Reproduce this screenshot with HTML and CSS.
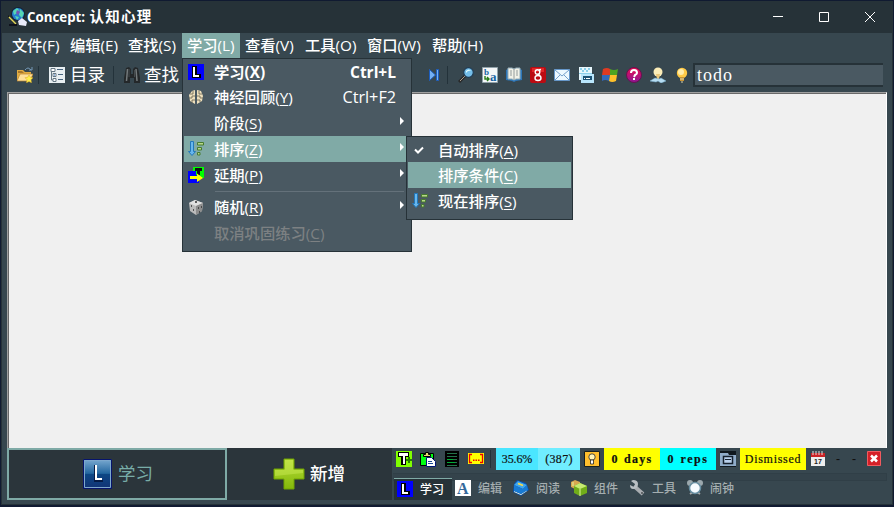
FILE: index.html
```
<!DOCTYPE html>
<html lang="zh-CN">
<head>
<meta charset="utf-8">
<title>Concept: 认知心理</title>
<link rel="stylesheet" href="styles.css">
</head>
<body>
<svg width="0" height="0" class="defs">
  <defs>
    <linearGradient id="blue" x1="0" y1="0" x2="0" y2="1"><stop offset="0" stop-color="#79a9d0"/><stop offset=".48" stop-color="#23669f"/><stop offset=".5" stop-color="#0d4785"/><stop offset="1" stop-color="#123375"/></linearGradient>
    <linearGradient id="green" x1="0" y1="0" x2="0" y2="1"><stop offset="0" stop-color="#b6dc38"/><stop offset="1" stop-color="#83b80b"/></linearGradient>
    <linearGradient id="pink" x1="0" y1="0" x2="0" y2="1"><stop offset="0" stop-color="#ed0b50"/><stop offset="1" stop-color="#8c1797"/></linearGradient>
    <symbol id="learn" viewBox="0 0 16 16"><path fill="#00f" d="M0 0h16v16H0z"/><path d="M4 2h5v8h4v4H4z" fill="#000"/><path d="M5 3h2v8h4v2H5z" fill="#fff"/></symbol>
    <symbol id="sort" viewBox="0 0 16 16"><path d="M2.500.5h3v10h2l-3.500 4-3.500-4h2z" fill="#68b7ed" stroke="#2378ba"/><path d="M9.500 1.500h6v2.500h-6zM9.500 6.500h4v2.500h-4zM9.500 11.500h2.500v2.500H9.500z" fill="#b8d889" stroke="#477b2f"/></symbol>
  </defs>
</svg>
<div class="window">
  <header class="titlebar">
    <svg class="appicon" viewBox="0 0 20 20"><circle cx="10" cy="7" r="7" fill="#142338"/><circle cx="10" cy="7" r="6" fill="#267ed0"/><path d="M5 4l4-3 2 2-2 3-3 2zM12 2l4 4-2 5-3-3zM7 9l4 1-2 3z" fill="#55d7b4"/><path d="M9 3l3 2-2 3-2-2z" fill="#7354b5"/><path d="M0 8l9 9-1 2-8-9z" fill="#171717"/><path d="M1 10l7 7" stroke="#e2d95d" stroke-width="1.500"/><path d="M10 14l4-3 5 4-1 4-7-1z" fill="#e9ebfa"/><path d="M1 18h8" stroke="#080815" stroke-width="1.500"/></svg>
    <h1>Concept: <span>认知心理</span></h1>
    <div class="controls"><svg viewBox="0 0 12 12"><path d="M1 5.500h10"/></svg><svg viewBox="0 0 12 12"><path d="M1.500 1.500h9v9h-9z"/></svg><svg viewBox="0 0 12 12"><path d="M1 1l10 10M11 1L1 11"/></svg></div>
  </header>
  <nav class="menubar"><span>文件(F)</span><span>编辑(E)</span><span>查找(S)</span><span class="selected">学习(L)</span><span class="m60">查看(V)</span><span class="m62">工具(O)</span><span class="m65">窗口(W)</span><span>帮助(H)</span></nav>
  <div class="toolbar">
    <svg class="icon" viewBox="0 0 16 16"><path d="M0 3h6l2 2h6v9H0z" fill="#e1ac42"/><path d="M1 4h4l2 2H1z" fill="#a7772c"/><path d="M3 7h13l-3 7H0z" fill="#ffe09a" stroke="#b9832e" stroke-width=".7"/><path d="M8 3q3-4 6 0M12 3h3V0" fill="none" stroke="#7598b6"/><path d="M12 8l1.300 2.300 2.700.4-2 2 .5 3-2.500-1.200-2.500 1.200.5-3-2-2 2.700-.4z" fill="#fff04e" stroke="#d8a523" stroke-width=".5"/></svg>
    <i class="rule catalog-rule"></i>
    <svg class="icon catalog" viewBox="0 0 16 16"><path d="M0 0h16v16H0z" fill="#e8eff2"/><path d="M2 1.500h4v3H2zM4 6.500h3v3H4zM4 11.500h3v3H4zM2.500 4v9H4" stroke="#657783" fill="#fff"/><path d="M8 2.500h6M9 7.500h5M9 12.500h5" stroke="#48657f"/><path d="M5 7.500h1v1H5z" fill="#266ac0"/></svg>
    <span class="tooltext">目录</span><i class="rule find-rule"></i>
    <svg class="icon find" viewBox="0 0 16 16"><path d="M2 1l3-1 2 2v5h2V2l2-2 3 1 2 10v5h-6v-5H6v5H0v-5z" fill="#24282a"/><path d="M3.500 2l-1 12M12 2l1 12" stroke="#747a7c" stroke-width="1.500"/><path d="M5 2v8M10.500 3v7" stroke="#454b4e"/></svg>
    <span class="tooltext">查找</span>
    <svg class="icon skip" viewBox="0 0 16 16"><path d="M3.500 2.500l6 5.500-6 5.500zM10.500 2.500h2v11h-2z" fill="#73b0f4" stroke="#1d5dbd"/></svg><i class="rule skip-rule"></i>
    <div class="toolset">
      <svg viewBox="0 0 16 16"><path d="M7 9l-6 6" stroke="#292929" stroke-width="3"/><path d="M7 9l-5 5" stroke="#ab9e8e"/><circle cx="10.500" cy="5.500" r="4.800" fill="#74bee9" stroke="#203c54" stroke-width="1.200"/><path d="M8 4q3-3 5 0-3-1-5 2z" fill="#ddfcff"/></svg>
      <svg viewBox="0 0 16 16"><path d="M.5.5h15v15H.5z" fill="#f4f7f8" stroke="#91a2aa"/><text x="2" y="8" class="tiny">b</text><text x="8" y="14" class="letter">a</text><path d="M3 9v3h4M5 10l2 2-2 2" fill="none" stroke="#277b17" stroke-width="1.400"/></svg>
      <svg viewBox="0 0 16 16"><path d="M0 3l2-1h12l2 1v10l-6 1-2 1-2-1-6-1z" fill="#2d76b8"/><path d="M2 1h4l2 1 2-1h4v11h-4l-2 1-2-1H2z" fill="#f1f1e8" stroke="#94adb9"/><path d="M8 2v10M4 4h2M4 6h2M4 8h2M10 4h2M10 6h2M10 8h2" stroke="#7c8588" stroke-width=".8"/></svg>
      <svg viewBox="0 0 16 16"><rect width="16" height="16" rx="2" fill="#bb0b12"/><path d="M2 1h12v4H2z" fill="#e12628"/><circle cx="7.500" cy="5" r="2.300" class="loop"/><ellipse cx="8" cy="11" rx="3" ry="2.500" class="loop"/><path d="M9 3l2-.5M8 7l2 1.500" class="loop"/></svg>
      <svg viewBox="0 0 16 16"><path d="M.5 2.500h15v11H.5z" fill="#edf8ff" stroke="#6697c9"/><path d="M1 3l7 6 7-6M1 13l5-5m9 5l-5-5" fill="none" stroke="#739fca"/></svg>
      <svg viewBox="0 0 16 16"><path d="M1 0h13v13H1z" fill="#e7f7fd"/><path d="M2 1h2v2H2zm4 0h2v2H6zm4 0h2v2h-2zM4 3h2v2H4zm4 0h2v2H8zM1 6h13v1H1z" fill="#8bd0eb"/><path d="M3 7h13v9H3z" fill="#b9e6fc"/><path d="M5 9h9v4H5z" fill="#1c5376"/><path d="M6 11h1v1H6zm2 0h4v1H8z" fill="#fff"/></svg>
      <svg viewBox="0 0 16 16"><path d="M1 2q4-2 7 0v6H0z" fill="#de3b23"/><path d="M8 2q4 2 8 0l-1 6H8z" fill="#4da421"/><path d="M0 8h8l-1 6q-4-2-7 0z" fill="#3269bc"/><path d="M8 8h7l-1 6q-4 2-7 0z" fill="#ffc12b"/></svg>
      <svg viewBox="0 0 16 16"><circle cx="8" cy="8" r="7.500" fill="url(#pink)" stroke="#65124f"/><path d="M5 6q0-3 3-3t3 3q0 1-2 2l-1 2M8 11v2" fill="none" stroke="#fff" stroke-width="2"/></svg>
      <svg viewBox="0 0 16 16"><circle cx="8" cy="5" r="4.500" fill="#fbedb8"/><path d="M6 7h4l-1 5H7z" fill="#e9c77b"/><path d="M5 11L0 14l6 1 2-1 3 2 5-2-5-3-2 1z" fill="#b7ddf2" stroke="#7cb4d5" stroke-width=".5"/></svg>
      <svg viewBox="0 0 16 16"><circle cx="8" cy="6" r="5.200" fill="#ffca46"/><circle cx="7" cy="5" r="3" fill="#ffedac"/><path d="M6 10h4v4H6z" fill="#c79232"/><path d="M6 12h4M7 15h2" stroke="#ddd5ac"/></svg>
    </div>
    <div class="search">todo</div>
  </div>
  <main></main>
  <footer>
    <div class="study"><svg viewBox="0 0 30 30"><path d="M.5.5h28v29H.5z" fill="url(#blue)" stroke="#06146c"/><path d="M1.500 1.500h26v27h-26z" fill="none" stroke="#7da8cd"/><path d="M11 6h2v15h7v2h-9z" fill="#061b45"/><path d="M12 6h2v13h5v2h-7z" fill="#fff"/></svg><span>学习</span></div>
    <div class="add"><svg viewBox="0 0 32 32"><path d="M11 1h10v10h10v10H21v10H11V21H1V11h10z" fill="url(#green)" stroke="#71a500"/><path d="M12 2h8v10h10v3L2 18v-6h10z" fill="#d1ef5c" opacity=".4"/></svg><span>新增</span></div>
    <div class="panel">
      <div class="status">
        <svg viewBox="0 0 16 16"><path fill="#80ff00" d="M0 0h16v16H0z"/><path d="M2 1h11v5h-3v8H5V6H2z" fill="#000"/><path d="M3 2h9v3H9v8H7V5H3z" fill="#fff"/><path d="M10 9h6m-3-3v6" stroke="#268000" stroke-width="2"/></svg>
        <svg viewBox="0 0 16 16"><path d="M.5 2.500h13v12H.5z" fill="#0f1" stroke="#000"/><path d="M3.500 5.500v-2h2v-2h3v2h2v2z" fill="#e7dc72" stroke="#000"/><path d="M6.500 6.500h5l4 4v5h-9z" fill="#fff" stroke="#001573"/><path d="M8 10.500h4M8 12.500h5" stroke="#1b4894"/></svg>
        <svg viewBox="0 0 16 16"><path fill="#000" d="M1 0h14v16H1z"/><path d="M3 2.500h10M3 5.500h10M3 8.500h10M3 11.500h10M3 14.500h10" stroke="#24734b"/><path d="M3 8.500h6M3 11.500h8" stroke="#00ae35"/></svg>
        <svg viewBox="0 0 16 16"><path fill="#ff0" d="M0 2h16v11H0z"/><path d="M4 3.500H1.500v8H4m8-8h2.500v8H12" fill="none" stroke="#e00" stroke-width="1.300"/><path d="M5 8.500h1.500v1.500H5zm2.500 0H9v1.500H7.500zm2.500 0h1.500v1.500H10z" fill="#e00"/></svg>
        <i class="rule status-rule"></i><span class="percent">35.6%</span><span class="count">(387)</span>
        <svg class="bulb" viewBox="0 0 16 16"><path d="M.5.5h15v15H.5z" fill="#ffbf2d" stroke="#17201f"/><circle cx="8" cy="6" r="3.200" fill="#fff5b8" stroke="#222" stroke-width=".8"/><path d="M6.500 9h3v4h-3z" fill="#fff" stroke="#222" stroke-width=".8"/></svg>
        <span class="days">0 days</span><span class="reps">0 reps</span>
        <svg class="folder" viewBox="0 0 16 16"><path d="M0 0h16v16H0z" fill="#10191f"/><path d="M0 2h8l1 2h7v11H0z" fill="#8facc9"/><path d="M3.500 5.500h9v7h-9z" fill="#b8d0ec" stroke="#14202d" stroke-width="1.500"/><path d="M5 8.500h6" stroke="#14202d"/></svg>
        <span class="dismissed">Dismissed</span>
        <svg class="calendar" viewBox="0 0 16 16"><path d="M1 2h14v13H1z" fill="#eee"/><path d="M1 2h14v4H1z" fill="#cb2326"/><path d="M3 0v4M6 0v4M9 0v4M12 0v4" stroke="#ddd"/><text x="4" y="13" class="date">17</text></svg><b>-</b><b>-</b>
        <svg class="close" viewBox="0 0 16 16"><path d="M.5.5h13v14H.5z" fill="#d52028" stroke="#f15b60"/><path d="M4 4.500l6 6m0-6l-6 6" stroke="#fff" stroke-width="2.500"/></svg>
      </div>
      <div class="groove"></div>
      <div class="tabs">
        <span class="active"><svg><use href="#learn"/></svg>学习</span>
        <span><svg viewBox="0 0 16 16"><path fill="#fff" d="M0 0h16v16H0z"/><text x="2" y="14" class="big-a">A</text></svg>编辑</span>
        <span><svg viewBox="0 0 16 16"><path d="M4 0l9 3 3 7-8 6-8-4 1-8z" fill="#0752b2"/><path d="M5 1l9 4-4 4-9-4z" fill="#3fa6ed"/><path d="M1 11l7 3 6-4v1l-6 4-7-3z" fill="#f5f5dc"/><path d="M1 5l9 4 4-4 1 5-7 4-7-3z" fill="#187bd4"/><path d="M5 3.500l5 2" stroke="#ffda42" stroke-width="1.500"/></svg>阅读</span>
        <span><svg viewBox="0 0 16 16"><path d="M0 2l4-2 5 2v5L4 9 0 7z" fill="#d8a750"/><path d="M3 6l6-3 7 3v7l-7 3-6-3z" fill="#71ad19"/><path d="M3 6l6-3 7 3-7 3z" fill="#c6eb72"/><path d="M9 9v7M2 2v4" stroke="#def6a2"/></svg>组件</span>
        <span><svg viewBox="0 0 16 16"><path d="M5 6l9 8" stroke="#a9adb1" stroke-width="4"/><path d="M2 1l4 3-1 3-4-2q0 4 3 4 5 0 5-5 0-4-5-4z" fill="#b9bfc3"/><circle cx="13" cy="13" r="1" fill="#4d5356"/></svg>工具</span>
        <span><svg viewBox="0 0 16 16"><circle cx="3" cy="3" r="3" fill="#9ba8ad"/><circle cx="13" cy="3" r="3" fill="#9ba8ad"/><path d="M3 14l3-2m7 2l-3-2" stroke="#aaa" stroke-width="2"/><circle cx="8" cy="8" r="5.500" fill="#f6fbff" stroke="#668da0" stroke-width="1.500"/></svg>闹钟</span>
      </div>
    </div>
  </footer>
</div>
<div class="menu primary">
  <div class="row strong"><svg><use href="#learn"/></svg><span>学习(<u>X</u>)</span><kbd>Ctrl+L</kbd></div>
  <div class="row"><svg viewBox="0 0 16 16"><path d="M7 1L4 2 1 6l1 6 5 3zM9 1l4 1 2 5-1 5-5 3z" fill="#efe0bd"/><path d="M5 2v3H2m5 2H4v2H1m6 2H4v3M11 2v3h3m-5 2h3v2h3m-6 2h3v2" fill="none" stroke="#66604f" stroke-width=".8"/></svg><span>神经回顾(<u>Y</u>)</span><kbd class="regular">Ctrl+F2</kbd></div>
  <div class="row"><svg></svg><span>阶段(<u>S</u>)</span><i class="arrow"></i></div>
  <div class="row hover"><svg><use href="#sort"/></svg><span>排序(<u>Z</u>)</span><i class="arrow"></i></div>
  <div class="row"><svg viewBox="0 0 16 16"><path d="M5 0h11v11H5z" fill="#0f0"/><path d="M7 1h7v3h-2v4H9V4H7z" fill="#111"/><path d="M0 4h8v4h3v8H0z" fill="#00f"/><path d="M2 9h7V6.500l6 4.500-6 4v-3H2z" fill="#ff0"/></svg><span>延期(<u>P</u>)</span><i class="arrow"></i></div>
  <div class="divider"></div>
  <div class="row"><svg viewBox="0 0 16 16"><path d="M1 4l6-3 8 3-1 8-6 4-6-4z" fill="#bbb"/><path d="M1 4l6-3 8 3-7 3z" fill="#e1e1e1"/><path d="M8 7l7-3-1 8-6 4z" fill="#8d8d8d"/><path d="M7 3h2M3 7h1m1 4h1m4-2h1m2-1h1m-3 5h1" stroke="#333" stroke-width="1.500"/></svg><span>随机(<u>R</u>)</span><i class="arrow"></i></div>
  <div class="row disabled"><svg></svg><span>取消巩固练习(<u>C</u>)</span></div>
</div>
<div class="menu submenu">
  <div class="row"><svg viewBox="0 0 16 16"><path d="M3 7.500l3 3 5-5" fill="none" stroke="#fff" stroke-width="2"/></svg><span>自动排序(<u>A</u>)</span></div>
  <div class="row hover"><svg></svg><span>排序条件(<u>C</u>)</span></div>
  <div class="row"><svg><use href="#sort"/></svg><span>现在排序(<u>S</u>)</span></div>
</div>
</body>
</html>
```
FILE: styles.css
```
* { box-sizing: border-box; }
body { margin: 0; width: 894px; height: 507px; overflow: hidden; background: #101a31; color: #fff; font: 500 15.5px/20px "Open Sans", "Noto Sans CJK SC", sans-serif; }
svg { display: block; flex-shrink: 0; width: 16px; height: 16px; }
.defs { position: absolute; width: 0; height: 0; }
.window { width: 892px; height: 504px; margin: 1px 0 0 1px; border: 1px solid #263238; border-top: 0; background: #37474f; display: flex; flex-direction: column; }
.titlebar { height: 32px; flex-shrink: 0; background: #263238; display: flex; align-items: center; padding-left: 6px; }
.appicon { width: 20px; height: 20px; }
h1 { font-size: 13.3px; line-height: 20px; margin: 0 0 0 -1px; font-weight: 700; white-space: nowrap; }
h1 span { font-size: 14.5px; letter-spacing: 1.2px; margin-left: 1px; }
.controls { margin-left: auto; display: flex; gap: 34px; padding-right: 16px; }
.controls svg { width: 12px; height: 12px; fill: none; stroke: #fff; }
.menubar { display: flex; height: 25px; flex-shrink: 0; padding-left: 5px; line-height: 25px; font-size: 15.3px; }
.menubar span { width: 58px; padding-left: 5px; white-space: nowrap; }
.menubar span:nth-child(3) { width: 59px; }
.menubar .m60 { width: 60px; }.menubar .m62 { width: 62px; }.menubar .m65 { width: 65px; }
.menubar .selected { background: #80aaa6; }
.toolbar { display: flex; height: 34px; flex-shrink: 0; align-items: center; padding-left: 15px; }
.rule { width: 1px; height: 18px; background: #23323a; flex-shrink: 0; }
.catalog-rule { margin-left: 5px; }.catalog { margin-left: 10px; }
.tooltext { width: 35px; margin-left: 5px; margin-top: -2px; font: 17.5px/20px "Noto Sans CJK SC", sans-serif; white-space: nowrap; }
.find-rule { margin-left: 8px; }.find { margin-left: 10px; }.find + .tooltext { margin-left: 4px; }
.skip { margin-left: 247px; }.skip-rule { margin-left: 5px; }
.toolset { margin-left: 10px; display: flex; gap: 8px; }
.tiny, .letter, .big-a { font-family: "Liberation Serif", serif; font-weight: bold; fill: #1765a4; }
.tiny { font-size: 9px; }.letter { font-size: 13px; }.big-a { font-size: 16px; fill: #34699c; }
.loop { fill: none; stroke: #fff; stroke-width: 1.4; }
.search { width: 190px; height: 24px; margin-left: 3px; border: 2px solid #263238; border-right: 0; background: #4a5962; padding-left: 2px; font: 18px/20px "Liberation Serif", serif; letter-spacing: 1px; }
main { height: 356px; margin: 0 5px 0 5px; flex-shrink: 0; background: #f0f0f0; border: solid #a0a0a0; border-width: 1px 1px 0 1px; border-right-color: #fff; box-shadow: inset 1px 1px #696969; }
footer { height: 52px; margin: 0 5px; display: flex; flex-shrink: 0; background: #2b353b; }
.study { width: 220px; border: 2px solid #7faaa6; display: flex; align-items: center; padding-left: 74px; color: #78ada8; }
.study svg { width: 30px; height: 30px; }.study span, .add span { margin-left: 5px; margin-top: -2px; font: 17.5px/24px "Noto Sans CJK SC", sans-serif; }
.add { width: 165px; display: flex; align-items: center; padding-left: 46px; }
.add svg { width: 32px; height: 32px; }.add span { font-weight: 500; }
.panel { flex: 1; background: #37474f; padding-left: 1px; min-width: 0; }
.status { display: flex; height: 22px; align-items: center; gap: 8px; padding-left: 3px; color: #101010; font: 12px/22px "Liberation Serif", serif; }
.status span { height: 22px; text-align: center; white-space: nowrap; flex-shrink: 0; -webkit-text-stroke: .2px #101010; }
.status-rule { margin-left: -2px; }
.status .percent { width: 42px; margin-left: -3px; background: #4ae6ff; letter-spacing: -.1px; }
.status .count { width: 42px; margin-left: -8px; background: #70edff; letter-spacing: .3px; }
.status .bulb { margin-left: -4px; }
.status .days { width: 56px; margin-left: -4px; background: #ff0; font-weight: bold; letter-spacing: 1.3px; word-spacing: 1px; }
.status .reps { width: 56px; margin-left: -8px; background: #0ff; font-weight: bold; letter-spacing: 1.5px; word-spacing: 1px; }
.folder, .status .dismissed, .calendar { margin-left: -4px; }
.status .dismissed { width: 66px; background: #ff0; letter-spacing: .7px; }
.status b { width: 8px; text-align: center; }
.status .close { margin-left: 1px; }
.date { font: bold 7px "Liberation Sans", sans-serif; fill: #222; }
.groove { height: 8px; margin-top: 3px; border: 1px solid #303f47; border-left: 0; background: #34434b; }
.tabs { display: flex; height: 22px; margin-top: -3px; position: relative; color: #a5aeb0; font: 500 12px/20px "Noto Sans CJK SC", sans-serif; padding-left: 1px; }
.tabs span { width: 58px; height: 22px; display: flex; align-items: center; gap: 7px; padding: 0 0 2px 3px; white-space: nowrap; flex-shrink: 0; }
.tabs .active { color: #fff; background: #263238; border-top: 1px solid #80aaa6; padding-bottom: 1px; }
.menu { position: absolute; background: #4a5962; border: 1px solid #263238; }
.primary { left: 182px; top: 58px; width: 230px; height: 194px; padding: 0 4px 0 1px; }
.submenu { left: 406px; top: 136px; width: 167px; height: 84px; padding: 0 1px; }
.row { height: 26px; display: flex; align-items: center; padding: 0 0 1px 4px; white-space: nowrap; }
.primary .row:first-child { height: 25px; padding-top: 1px; }
.submenu .row:first-child { height: 25px; padding-top: 2px; }
.row > span { margin-left: 10px; font-size: 15.3px; }
.row kbd { margin-left: auto; margin-right: 11px; font: inherit; }
.row .regular { font-size: 16.2px; }
.strong { font-weight: bold; }
.hover { background: #80aaa6; }.disabled { color: #7d8183; }
.row u { text-decoration-thickness: 1px; text-underline-offset: 2px; }
.arrow { margin-left: auto; margin-right: 3px; margin-top: -4px; width: 0; height: 0; border: 4px solid transparent; border-left-color: #fff; border-right: 0; }
.divider { height: 1px; margin: 3px 3px 2px 31px; background: #64717a; }
```
